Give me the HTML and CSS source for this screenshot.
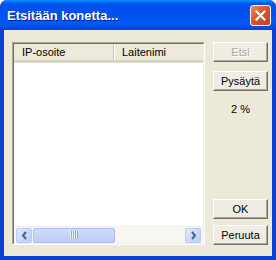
FILE: index.html
```html
<!DOCTYPE html>
<html lang="fi">
<head>
    <meta charset="UTF-8" />
    <title>Etsitään konetta...</title>
    <link rel="stylesheet" href="styles.css">
</head>
<body>
    <div class="window">
        <div class="titlebar">
            <span class="title">Etsitään konetta...</span>
            <span class="close">
                <svg width="11" height="11" viewBox="0 0 11 11">
                    <path d="M1.5 1.5 L9.5 9.5 M9.5 1.5 L1.5 9.5" stroke="#fff" stroke-width="2.2" stroke-linecap="square" />
                </svg>
            </span>
        </div>
        <div class="client">
            <div class="list">
                <div class="list-inner">
                    <div class="list-head">
                        <div class="col col-ip">IP-osoite</div>
                        <div class="col col-name">Laitenimi</div>
                    </div>
                    <div class="list-body"></div>
                    <div class="hscroll">
                        <span class="arrow">
                            <svg width="7" height="9" viewBox="0 0 7 9">
                                <path d="M5 1 L2 4.5 L5 8" fill="none" stroke="#4d6185" stroke-width="2" />
                            </svg>
                        </span>
                        <div class="track">
                            <div class="thumb">
                                <svg width="9" height="8" viewBox="0 0 9 8">
                                    <path d="M0.5 0 V8 M2.5 0 V8 M4.5 0 V8 M6.5 0 V8" stroke="#eef3fe" stroke-width="1" />
                                    <path d="M1.5 0 V8 M3.5 0 V8 M5.5 0 V8 M7.5 0 V8" stroke="#8ca8e8" stroke-width="1" />
                                </svg>
                            </div>
                        </div>
                        <span class="arrow">
                            <svg width="7" height="9" viewBox="0 0 7 9">
                                <path d="M2 1 L5 4.5 L2 8" fill="none" stroke="#4d6185" stroke-width="2" />
                            </svg>
                        </span>
                    </div>
                </div>
            </div>
            <div class="side">
                <button class="btn" disabled>Etsi</button>
                <button class="btn">Pysäytä</button>
                <div class="progress">2 %</div>
                <div class="spacer"></div>
                <button class="btn">OK</button>
                <button class="btn">Peruuta</button>
            </div>
        </div>
    </div>
</body>
</html>
```

FILE: styles.css
```css
* {
    box-sizing: border-box;
}
body {
    margin: 0;
    background: #fff;
    font-family: 'Liberation Sans', Arial, sans-serif;
    font-size: 11px;
    color: #000;
}
.window {
    width: 276px;
    height: 260px;
    display: flex;
    flex-direction: column;
    background: #0842d6;
    border-radius: 7px 7px 0 0;
    overflow: hidden;
}
/* barra de titulo azul XP */
.titlebar {
    height: 30px;
    flex: none;
    display: flex;
    align-items: center;
    padding: 0 5px 0 7px;
    background: linear-gradient(to bottom, #0997ff 0%, #0053ee 12%, #0050ee 40%, #0058f5 75%, #0046d8 100%);
}
.title {
    flex: 1;
    color: #fff;
    font-weight: 700;
    font-size: 13px;
    text-shadow: 1px 1px 0 #0a1e8c;
}
.close {
    width: 21px;
    height: 21px;
    border: 1px solid #fff;
    border-radius: 3px;
    background: linear-gradient(135deg, #e98a68 0%, #d9552f 45%, #c63e1c 100%);
    display: flex;
    justify-content: center;
    align-items: center;
}
.client {
    flex: 1;
    margin: 0 4px 4px;
    background: #ece9d8;
    display: flex;
    gap: 8px;
    padding: 12px 4px 11px 8px;
}
.list {
    width: 193px;
    border: 1px solid;
    border-color: #aca899 #fff #fff #aca899;
}
.list-inner {
    height: 100%;
    border: 1px solid;
    border-color: #716f64 #f1efe2 #f1efe2 #716f64;
    background: #fff;
    display: flex;
    flex-direction: column;
}
.list-head {
    height: 18px;
    display: flex;
    background: #ebeadb;
    border-bottom: 2px solid #d6d2c2;
    box-shadow: 0 1px 0 #e2decd;
}
.col {
    padding: 2px 0 0 8px;
    border-right: 1px solid #c7c5b2;
    box-shadow: 1px 0 0 #fff;
}
.col-ip {
    width: 100px;
}
.col-name {
    width: 88px;
    border-right: none;
    box-shadow: none;
}
.list-body {
    flex: 1;
}
.hscroll {
    height: 17px;
    display: flex;
    align-items: center;
    padding: 0 2px;
    gap: 1px;
    background: #f7f6f1;
    border-top: 1px solid #efeee6;
}
.arrow {
    width: 16px;
    height: 15px;
    border: 1px solid #b9cbf3;
    border-radius: 2px;
    background: linear-gradient(to bottom right, #dfe8fd, #b9cdf8);
    display: flex;
    justify-content: center;
    align-items: center;
}
.track {
    flex: 1;
    height: 15px;
}
.thumb {
    width: 82px;
    height: 15px;
    border: 1px solid #a9bdf0;
    border-radius: 2px;
    background: linear-gradient(to bottom, #cddbfc, #bccffa);
    display: flex;
    justify-content: center;
    align-items: center;
}
.side {
    width: 55px;
    display: flex;
    flex-direction: column;
}
.btn {
    height: 20px;
    width: 55px;
    padding: 0;
    font-family: inherit;
    font-size: 11px;
    color: #000;
    background: #efede3;
    border: 1px solid;
    border-color: #fff #716f64 #716f64 #fff;
    box-shadow: inset -1px -1px 0 #aca899;
}
.btn + .btn {
    margin-top: 9px;
}
.btn:disabled {
    color: #aca899;
    text-shadow: 1px 1px 0 #fff;
}
.progress {
    margin-top: 12px;
    text-align: center;
}
.spacer {
    flex: 1;
}
.spacer + .btn {
    margin-top: 0;
}
.spacer + .btn + .btn {
    margin-top: 6px;
}
```
